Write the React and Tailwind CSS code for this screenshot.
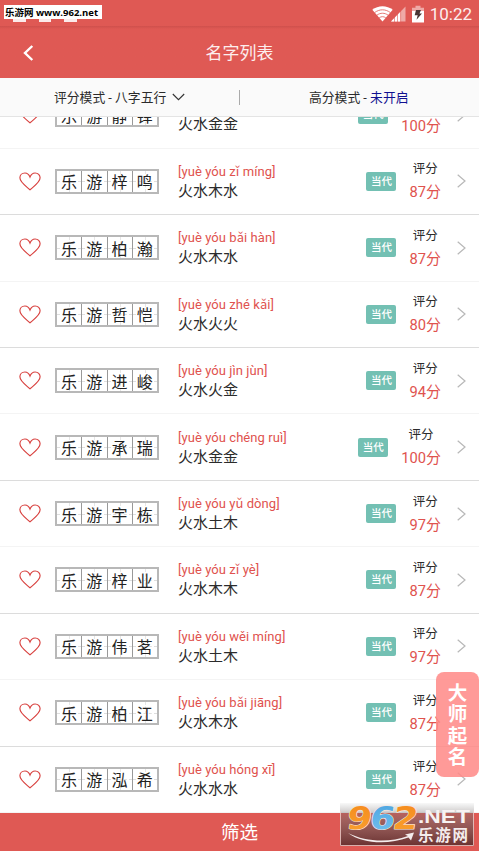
import React from 'react';

const names = [
  { name: '乐游静铎', pinyin: '[yuè yóu jìng duó]', wuxing: '火水金金', score: '100' },
  { name: '乐游梓鸣', pinyin: '[yuè yóu zǐ míng]', wuxing: '火水木水', score: '87' },
  { name: '乐游柏瀚', pinyin: '[yuè yóu bǎi hàn]', wuxing: '火水木水', score: '87' },
  { name: '乐游哲恺', pinyin: '[yuè yóu zhé kǎi]', wuxing: '火水火火', score: '80' },
  { name: '乐游进峻', pinyin: '[yuè yóu jìn jùn]', wuxing: '火水火金', score: '94' },
  { name: '乐游承瑞', pinyin: '[yuè yóu chéng ruì]', wuxing: '火水金金', score: '100' },
  { name: '乐游宇栋', pinyin: '[yuè yóu yǔ dòng]', wuxing: '火水土木', score: '97' },
  { name: '乐游梓业', pinyin: '[yuè yóu zǐ yè]', wuxing: '火水木木', score: '87' },
  { name: '乐游伟茗', pinyin: '[yuè yóu wěi míng]', wuxing: '火水土木', score: '97' },
  { name: '乐游柏江', pinyin: '[yuè yóu bǎi jiāng]', wuxing: '火水木水', score: '87' },
  { name: '乐游泓希', pinyin: '[yuè yóu hóng xī]', wuxing: '火水水水', score: '87' },
];

function StatusBar() {
  return (
    <div className="relative flex h-[26px] shrink-0 items-center justify-end pr-[7px] text-white">
      <div className="absolute left-[13px] top-[19px] flex gap-[13px]">
        <i className="h-[3px] w-[12.5px] bg-[#fbeaea]" />
        <i className="h-[3px] w-[12.5px] bg-[#fbeaea]" />
        <i className="h-[3px] w-[12.5px] bg-[#fbeaea]" />
      </div>
      <div className="absolute left-1 top-[5px] h-[14px] w-[98px] whitespace-nowrap bg-white pl-px font-['Open_Sans','Noto_Sans_CJK_SC',sans-serif] text-[9.5px] font-bold leading-[15px] text-black">
        乐游网 www.962.net
      </div>
      <svg className="mt-[1px] h-[17px] w-[21px]" viewBox="0 0 21 17">
        <path d="M0.3 4.8C6 .1 15 .1 20.7 4.8L10.5 16.6z" fill="#fff" />
        <path d="M2.6 7.6C7.5 3.9 13.5 3.9 18.4 7.6M4.9 10.2C8.3 7.6 12.7 7.6 16.1 10.2M7.2 12.8C9.2 11.3 11.8 11.3 13.8 12.8" fill="none" stroke="#df5954" strokeWidth="0.8" />
      </svg>
      <svg className="-ml-[2px] mt-[1px] h-[17px] w-[15px]" viewBox="0 0 15 17">
        <path d="M0 16.5L14.5 1.5v15z" fill="#efaaa7" />
        <path d="M0 16.5L9.5 6.7v9.8z" fill="#fff" />
        <path d="M3.5 12v5M6.5 9v8M9.6 6v11" stroke="#df5954" strokeWidth="0.6" />
      </svg>
      <svg className="ml-[6px] mt-[1px] h-[18px] w-[12px]" viewBox="0 0 12 18">
        <path d="M3.5 .8h5v2H12V7H0V2.8h3.5z" fill="#efaaa7" />
        <path d="M0 6h12v11.5H0z" fill="#fff" />
        <path d="M4 5h5L7.5 8.6H10L4.5 14.8l1.2-4.5H2.7z" fill="#4a3534" />
      </svg>
      <span className="ml-[6px] mt-[1px] text-[17px] leading-5 text-[#fdeeee]">10:22</span>
    </div>
  );
}

function NameGrid({ name }) {
  return (
    <div className="flex h-[25px] w-[104px] shrink-0 border-2 border-[#b8b8b8]">
      {name.split('').map((char, i) => (
        <div
          key={i}
          className="relative flex flex-1 items-center justify-center border-r-[1.5px] border-[#999] last:border-r-0"
        >
          <i className="absolute inset-x-0 top-1/2 border-t border-dashed border-[#dedede]" />
          <i className="absolute inset-y-0 left-1/2 border-l border-dashed border-[#e6e6e6]" />
          <span className="relative top-[2px] text-[16px] leading-[20px] text-[#222]">{char}</span>
        </div>
      ))}
    </div>
  );
}

function NameRow({ item, strong }) {
  return (
    <div
      className={`flex h-[66.45px] shrink-0 items-center border-b pl-[19px] pr-[13px] ${
        strong ? 'border-[#dcdcdc]' : 'border-[#f4f4f4]'
      }`}
    >
      <svg className="h-[19px] w-[22px] shrink-0" viewBox="0 0 22 20" fill="none" stroke="#d8403e" strokeWidth="1.15" preserveAspectRatio="none">
        <path d="M11 5.4C10 2.4 8.3 1 5.9 1 3 1 .9 3.2 .9 6.1c0 4.7 5.8 8.5 10.1 12.6 4.3-4.1 10.1-7.9 10.1-12.6C21.1 3.2 19 1 16.1 1 13.7 1 12 2.4 11 5.4z" />
      </svg>
      <div className="ml-[14px]">
        <NameGrid name={item.name} />
      </div>
      <div className="ml-[19px] mt-[1px] whitespace-nowrap">
        <div className="text-[13px] leading-[18px] tracking-[0.06px] text-[#e0524e]">{item.pinyin}</div>
        <div className="text-[15px] leading-[20px] text-[#2b2b2b]">{item.wuxing}</div>
      </div>
      <span className="ml-auto h-[19px] w-[30px] rounded-[2px] bg-[#73c0b3] text-center text-[10.5px] font-medium leading-[19px] text-white">
        当代
      </span>
      <div className="-mt-px ml-[13px] flex flex-col items-center">
        <span className="text-[12.5px] leading-[20px] text-[#2b2b2b]">评分</span>
        <span className="mt-[3px] text-[15px] leading-[20px] text-[#e0524e]">
          <span className="text-[14.7px]">{item.score}</span>分
        </span>
      </div>
      <svg className="ml-[16px] h-[14px] w-[9px]" viewBox="0 0 9 14" fill="none" stroke="#b8b8b8" strokeWidth="1.2">
        <path d="M.7 .7L8 7 .7 13.3" />
      </svg>
    </div>
  );
}

function SiteLogo() {
  return (
    <svg
      className="absolute left-[340px] top-[803px] h-[43px] w-[134px]"
      viewBox="0 0 134 43"
      fontFamily="'Liberation Sans', 'Noto Sans CJK SC', sans-serif"
      fontWeight="bold"
    >
      <defs>
        <linearGradient id="plate" x1="0" y1="0" x2="0" y2="1">
          <stop offset="0" stopColor="#777" stopOpacity="0.05" />
          <stop offset="0.4" stopColor="#776563" stopOpacity="0.6" />
          <stop offset="1" stopColor="#6a302f" />
        </linearGradient>
        <linearGradient id="orange" x1="0" y1="0" x2="0" y2="1">
          <stop offset="0" stopColor="#f58a1c" />
          <stop offset="1" stopColor="#f9a130" />
        </linearGradient>
        <linearGradient id="blue" x1="0" y1="0" x2="0" y2="1">
          <stop offset="0" stopColor="#4aa3df" />
          <stop offset="1" stopColor="#74c2f0" />
        </linearGradient>
      </defs>
      <rect width="134" height="43" fill="url(#plate)" />
      <path d="M.5 8v34.5h133V8" fill="none" stroke="#f3cfcc" strokeOpacity=".8" />
      <g
        transform="translate(4.5 0) skewX(-8)"
        fontFamily="'DejaVu Sans', sans-serif"
        fontSize="31"
        stroke="#f4e6df"
        strokeWidth="1.2"
        strokeLinejoin="round"
        paintOrder="stroke"
      >
        <text x="5" y="26" textLength="25" lengthAdjust="spacingAndGlyphs" fill="url(#orange)">9</text>
        <text x="28" y="26" textLength="25" lengthAdjust="spacingAndGlyphs" fill="url(#blue)">6</text>
        <text x="51" y="26" textLength="25" lengthAdjust="spacingAndGlyphs" fill="url(#orange)">2</text>
      </g>
      <text x="78" y="20" fontSize="19" textLength="52" lengthAdjust="spacingAndGlyphs" fill="#f7f2f2">.NET</text>
      <path d="M8 30c18 9 41 10 60 3l-3-1.500 9-2-3 8-2.500-3C48 42 23 41 8 30z" fill="#f4ecec" />
      <text x="78" y="37.500" fontSize="15.500" textLength="50" fill="#f4ecec">乐游网</text>
    </svg>
  );
}

export default function App() {
  return (
    <div className="relative flex h-[851px] w-[479px] flex-col overflow-hidden bg-white font-[Roboto,'Noto_Sans_CJK_SC',sans-serif]">
      <header className="h-[77.5px] shrink-0 bg-[#df5954]">
        <StatusBar />
        <div className="grid h-[51px] grid-cols-[60px_1fr_60px] items-center bg-linear-to-b from-[#cf504c] to-[#df5954] to-[3px]">
          <svg className="ml-[23px] mt-[3px] h-[16px] w-[11px]" viewBox="0 0 11 16" fill="none" stroke="#fff" strokeWidth="2.4">
            <path d="M9.3 1L2 8l7.3 7" />
          </svg>
          <h1 className="mt-[2px] text-center text-[17px] leading-6 text-[#fdeeee]">名字列表</h1>
        </div>
      </header>

      <div className="flex h-[39.5px] shrink-0 items-center border-b border-[#e4e4e4] bg-[#fafafa] pt-px text-[12.8px] leading-5 text-[#2b2b2b]">
        <div className="flex w-[240px] items-center border-r border-[#aaa] pl-[54px]">
          <span className="w-[113px] whitespace-nowrap leading-[15px]">评分模式 - 八字五行</span>
          <svg className="ml-[5px] h-[8px] w-[13px]" viewBox="0 0 13 8" fill="none" stroke="#333" strokeWidth="1.1">
            <path d="M.8 1l5.7 5.7L12.2 1" />
          </svg>
        </div>
        <div className="flex-1 pl-[69px] pt-px">
          高分模式 - <span className="text-[#101090]">未开启</span>
        </div>
      </div>

      <main className="flex h-[696px] shrink-0 flex-col justify-end overflow-hidden">
        {names.map((item, i) => (
          <NameRow key={item.name} item={item} strong={i % 2 === 1} />
        ))}
      </main>

      <footer className="flex h-[38px] shrink-0 items-center justify-center bg-[#df5954] pt-[2px] text-[18.5px] leading-6 text-white">
        筛选
      </footer>

      <div className="absolute right-0 top-[672px] flex h-[105px] w-[43px] flex-col items-center justify-center rounded-[8px] bg-[#ff8886]/85 pt-[2px] text-[19.5px] font-bold leading-[21.3px] text-white">
        <span>大</span>
        <span>师</span>
        <span>起</span>
        <span>名</span>
      </div>
      <SiteLogo />
    </div>
  );
}
